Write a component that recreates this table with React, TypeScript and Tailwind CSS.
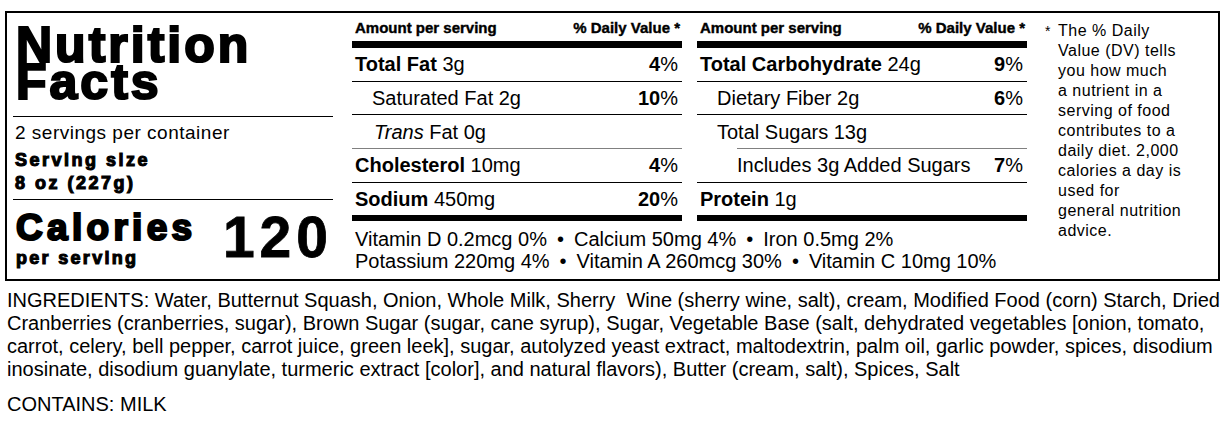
import type { ReactNode } from "react"

function Pct({ v }: { v: string }) {
    return <span><span className="font-bold">{v}</span>%</span>
}

function NutrientRow({ children, dv, line = "black" }: { children: ReactNode; dv?: string; line?: "black" | "gray" | "indent" | "none" }) {
    return (
        <>
            <div className="flex h-[32.7px] items-center justify-between pl-[3px] pr-[4px] text-[20px] leading-none">
                <div className="whitespace-nowrap">{children}</div>
                {dv && <Pct v={dv} />}
            </div>
            {line === "black" && <div className="h-px bg-black" />}
            {line === "gray" && <div className="h-px bg-[#808080]" />}
            {line === "indent" && <div className="ml-[40px] h-px bg-[#808080]" />}
        </>
    )
}

function TableHead() {
    return (
        <>
            <div className="flex h-[28px] items-center justify-between pl-[3px] pr-[2px] text-[15px] font-bold leading-none [-webkit-text-stroke:0.4px_#000]">
                <span>Amount per serving</span>
                <span>% Daily Value *</span>
            </div>
            <div className="h-[7px] bg-black" />
        </>
    )
}

const ingredients = [
    "INGREDIENTS: Water, Butternut Squash, Onion, Whole Milk, Sherry\u00a0 Wine (sherry wine, salt), cream, Modified Food (corn) Starch, Dried",
    "Cranberries (cranberries, sugar), Brown Sugar (sugar, cane syrup), Sugar, Vegetable Base (salt, dehydrated vegetables [onion, tomato,",
    "carrot, celery, bell pepper, carrot juice, green leek], sugar, autolyzed yeast extract, maltodextrin, palm oil, garlic powder, spices, disodium",
    "inosinate, disodium guanylate, turmeric extract [color], and natural flavors), Butter (cream, salt), Spices, Salt",
]

const footnote = ["The % Daily", "Value (DV) tells", "you how much", "a nutrient in a", "serving of food", "contributes to a", "daily diet. 2,000", "calories a day is", "used for", "general nutrition", "advice."]

export default function App() {
    return (
        <main className="min-h-screen bg-white px-[5px] pt-[11px] text-black font-['Liberation_Sans',Arial,sans-serif]">
            <div className="flex h-[270px] border-2 border-black pl-[6px]">
                {/* Title + serving + calories */}
                <div className="w-[320px] shrink-0">
                    <div className="border-b border-black pl-[3px] pt-[14px] pb-[15px]">
                        <h1 className="text-[50px] font-bold leading-[37px] tracking-[3px] [-webkit-text-stroke:2.2px_#000]">Nutrition<br />Facts</h1>
                    </div>
                    <div className="border-b border-black pl-[2px] pt-[5px] pb-[4px]">
                        <p className="text-[19px] leading-[22px] tracking-[0.5px]">2 servings per container</p>
                        <p className="mt-[5px] text-[18px] font-bold leading-[23px] tracking-[2.5px] [-webkit-text-stroke:1.1px_#000]">Serving size<br />8 oz (227g)</p>
                    </div>
                    <div className="flex items-start justify-between">
                        <div className="pt-[10px] pl-[3px]">
                            <div className="text-[37px] font-bold leading-[36px] tracking-[4.3px] [-webkit-text-stroke:2.2px_#000]">Calories</div>
                            <div className="text-[18px] font-bold leading-[24px] tracking-[2.3px] [-webkit-text-stroke:1.1px_#000]">per serving</div>
                        </div>
                        <div className="pt-[12px] text-[57px] font-bold leading-[50px] tracking-[5px] [-webkit-text-stroke:0.8px_#000]">120</div>
                    </div>
                </div>

                {/* Nutrient tables */}
                <div className="ml-[19px] w-[675px] shrink-0">
                    <div className="flex gap-[15px]">
                        <div className="w-[330px]">
                            <TableHead />
                            <NutrientRow dv="4"><b>Total Fat</b> 3g</NutrientRow>
                            <NutrientRow dv="10"><span className="pl-[17px]">Saturated Fat 2g</span></NutrientRow>
                            <NutrientRow line="gray"><span className="pl-[19px]"><i>Trans</i> Fat 0g</span></NutrientRow>
                            <NutrientRow dv="4"><b>Cholesterol</b> 10mg</NutrientRow>
                            <NutrientRow dv="20" line="none"><b>Sodium</b> 450mg</NutrientRow>
                            <div className="h-[6px] bg-black" />
                        </div>
                        <div className="w-[330px]">
                            <TableHead />
                            <NutrientRow dv="9"><b>Total Carbohydrate</b> 24g</NutrientRow>
                            <NutrientRow dv="6"><span className="pl-[17px]">Dietary Fiber 2g</span></NutrientRow>
                            <NutrientRow line="indent"><span className="pl-[17px]">Total Sugars 13g</span></NutrientRow>
                            <NutrientRow dv="7"><span className="pl-[37px]">Includes 3g Added Sugars</span></NutrientRow>
                            <NutrientRow line="none"><b>Protein</b> 1g</NutrientRow>
                            <div className="h-[6px] bg-black" />
                        </div>
                    </div>
                    <div className="pt-[7px] pl-[3px] text-[20px] leading-[22px] whitespace-nowrap">
                        <p>Vitamin D 0.2mcg 0%<span className="mx-[10px]">•</span>Calcium 50mg 4%<span className="mx-[10px]">•</span>Iron 0.5mg 2%</p>
                        <p>Potassium 220mg 4%<span className="mx-[10px]">•</span>Vitamin A 260mcg 30%<span className="mx-[10px]">•</span>Vitamin C 10mg 10%</p>
                    </div>
                </div>

                {/* Footnote */}
                <div className="ml-[18px] flex pt-[8px] text-[16px] leading-[20px] tracking-[0.5px]">
                    <span className="w-[13px] shrink-0 text-[14px]">*</span>
                    <p className="whitespace-nowrap">
                        {footnote.map(l => <span key={l} className="block">{l}</span>)}
                    </p>
                </div>
            </div>

            {/* Ingredients */}
            <div className="pt-[8px] pl-[2px] text-[20px] leading-[23px] whitespace-nowrap">
                {ingredients.map(l => <p key={l}>{l}</p>)}
                <p className="mt-[12px]">CONTAINS: MILK</p>
            </div>
        </main>
    )
}
